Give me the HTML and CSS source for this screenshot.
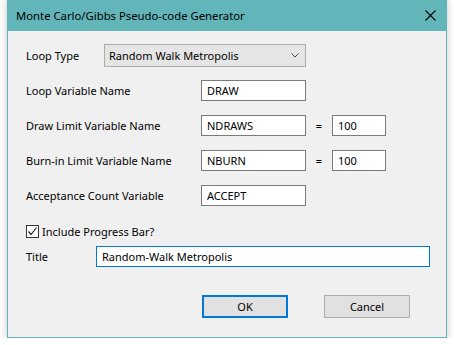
FILE: index.html
```html
<!DOCTYPE html>
<html lang="en">
<head>
    <meta charset="UTF-8">
    <title>Monte Carlo/Gibbs Pseudo-code Generator</title>
    <link rel="stylesheet" href="styles.css">
</head>
<body>
    <div class="window">
        <!-- Title bar -->
        <div class="titlebar">
            <span class="title">Monte Carlo/Gibbs Pseudo-code Generator</span>
            <svg class="close" width="11" height="11" viewBox="0 0 11 11">
                <path d="M0.5 0.5 L10.5 10.5 M10.5 0.5 L0.5 10.5" stroke="#000" stroke-width="1.1" fill="none"/>
            </svg>
        </div>

        <!-- Dialog body -->
        <div class="content">
            <div class="row row-select">
                <label class="lbl lbl-short">Loop Type</label>
                <div class="select">
                    <span>Random Walk Metropolis</span>
                    <svg class="chevron" width="8" height="5" viewBox="0 0 8 5">
                        <path d="M0.5 0.5 L4 4 L7.5 0.5" stroke="#444" stroke-width="1" fill="none"/>
                    </svg>
                </div>
            </div>
            <div class="row">
                <label class="lbl">Loop Variable Name</label>
                <input class="field" type="text" value="DRAW">
            </div>
            <div class="row">
                <label class="lbl">Draw Limit Variable Name</label>
                <input class="field" type="text" value="NDRAWS">
                <span class="eq">=</span>
                <input class="field small" type="text" value="100">
            </div>
            <div class="row">
                <label class="lbl">Burn-in Limit Variable Name</label>
                <input class="field" type="text" value="NBURN">
                <span class="eq">=</span>
                <input class="field small" type="text" value="100">
            </div>
            <div class="row">
                <label class="lbl">Acceptance Count Variable</label>
                <input class="field" type="text" value="ACCEPT">
            </div>

            <div class="check-row">
                <span class="checkbox">
                    <svg width="11" height="11" viewBox="0 0 11 11">
                        <path d="M1.5 5.5 L4 8.5 L9.5 1.5" stroke="#222" stroke-width="1.2" fill="none"/>
                    </svg>
                </span>
                <span>Include Progress Bar?</span>
            </div>
            <div class="row title-row">
                <label class="lbl lbl-title">Title</label>
                <input class="field wide focused" type="text" value="Random-Walk Metropolis">
            </div>

            <div class="buttons">
                <button class="btn default">OK</button>
                <button class="btn">Cancel</button>
            </div>
        </div>
    </div>
</body>
</html>
```

FILE: styles.css
```css
body {
    margin: 0;
    padding: 0 0 0 7px;
    background-color: #ffffff;
    font-family: "Noto Sans", sans-serif;
    font-size: 11px;
    color: #000;
}
.window {
    width: 440px;
    height: 338px;
    box-sizing: border-box;
    border: 1px solid #60b4b8;
    border-top: none;
    background-color: #f0f0f0;
    box-shadow: 0 0 7px 1px rgba(0, 0, 0, 0.18);
}
.titlebar {
    height: 31px;
    background-color: #62b5b9;
    display: flex;
    align-items: center;
    justify-content: space-between;
    padding: 0 10px 0 8px;
}
.title {
    font-size: 11.3px;
}
.content {
    padding: 13px 0 0 18px;
}
.row {
    display: flex;
    align-items: center;
    height: 21px;
    margin-bottom: 14px;
}
.row-select {
    height: 23px;
    margin-bottom: 13px;
}
.lbl {
    width: 175px;
    flex-shrink: 0;
}
.lbl-short {
    width: 78px;
}
.lbl-title {
    width: 70px;
}
.select {
    width: 202px;
    height: 23px;
    box-sizing: border-box;
    border: 1px solid #adadad;
    background-color: #e5e5e5;
    display: flex;
    align-items: center;
    justify-content: space-between;
    padding: 0 6px 0 4px;
}
.field {
    width: 105px;
    height: 21px;
    box-sizing: border-box;
    border: 1px solid #7a7a7a;
    background-color: #fff;
    padding: 0 5px;
    margin: 0;
    font-family: inherit;
    font-size: 11px;
    color: #000;
    outline: none;
}
.field.small {
    width: 54px;
}
.field.wide {
    width: 334px;
}
.field.focused {
    border-color: #0078d7;
}
.eq {
    width: 26px;
    text-align: center;
}
.check-row {
    display: flex;
    align-items: center;
    height: 13px;
    margin: 19px 0 8px;
}
.checkbox {
    width: 13px;
    height: 13px;
    box-sizing: border-box;
    border: 1px solid #333;
    background-color: #fff;
    display: flex;
    align-items: center;
    justify-content: center;
    margin-right: 3px;
}
.title-row {
    margin-bottom: 0;
}
.buttons {
    display: flex;
    gap: 36px;
    padding: 28px 0 0 176px;
}
.btn {
    width: 86px;
    height: 23px;
    box-sizing: border-box;
    border: 1px solid #adadad;
    background-color: #e1e1e1;
    font-family: inherit;
    font-size: 11px;
    color: #000;
    padding: 0;
}
.btn.default {
    border: 2px solid #0078d7;
}
```
